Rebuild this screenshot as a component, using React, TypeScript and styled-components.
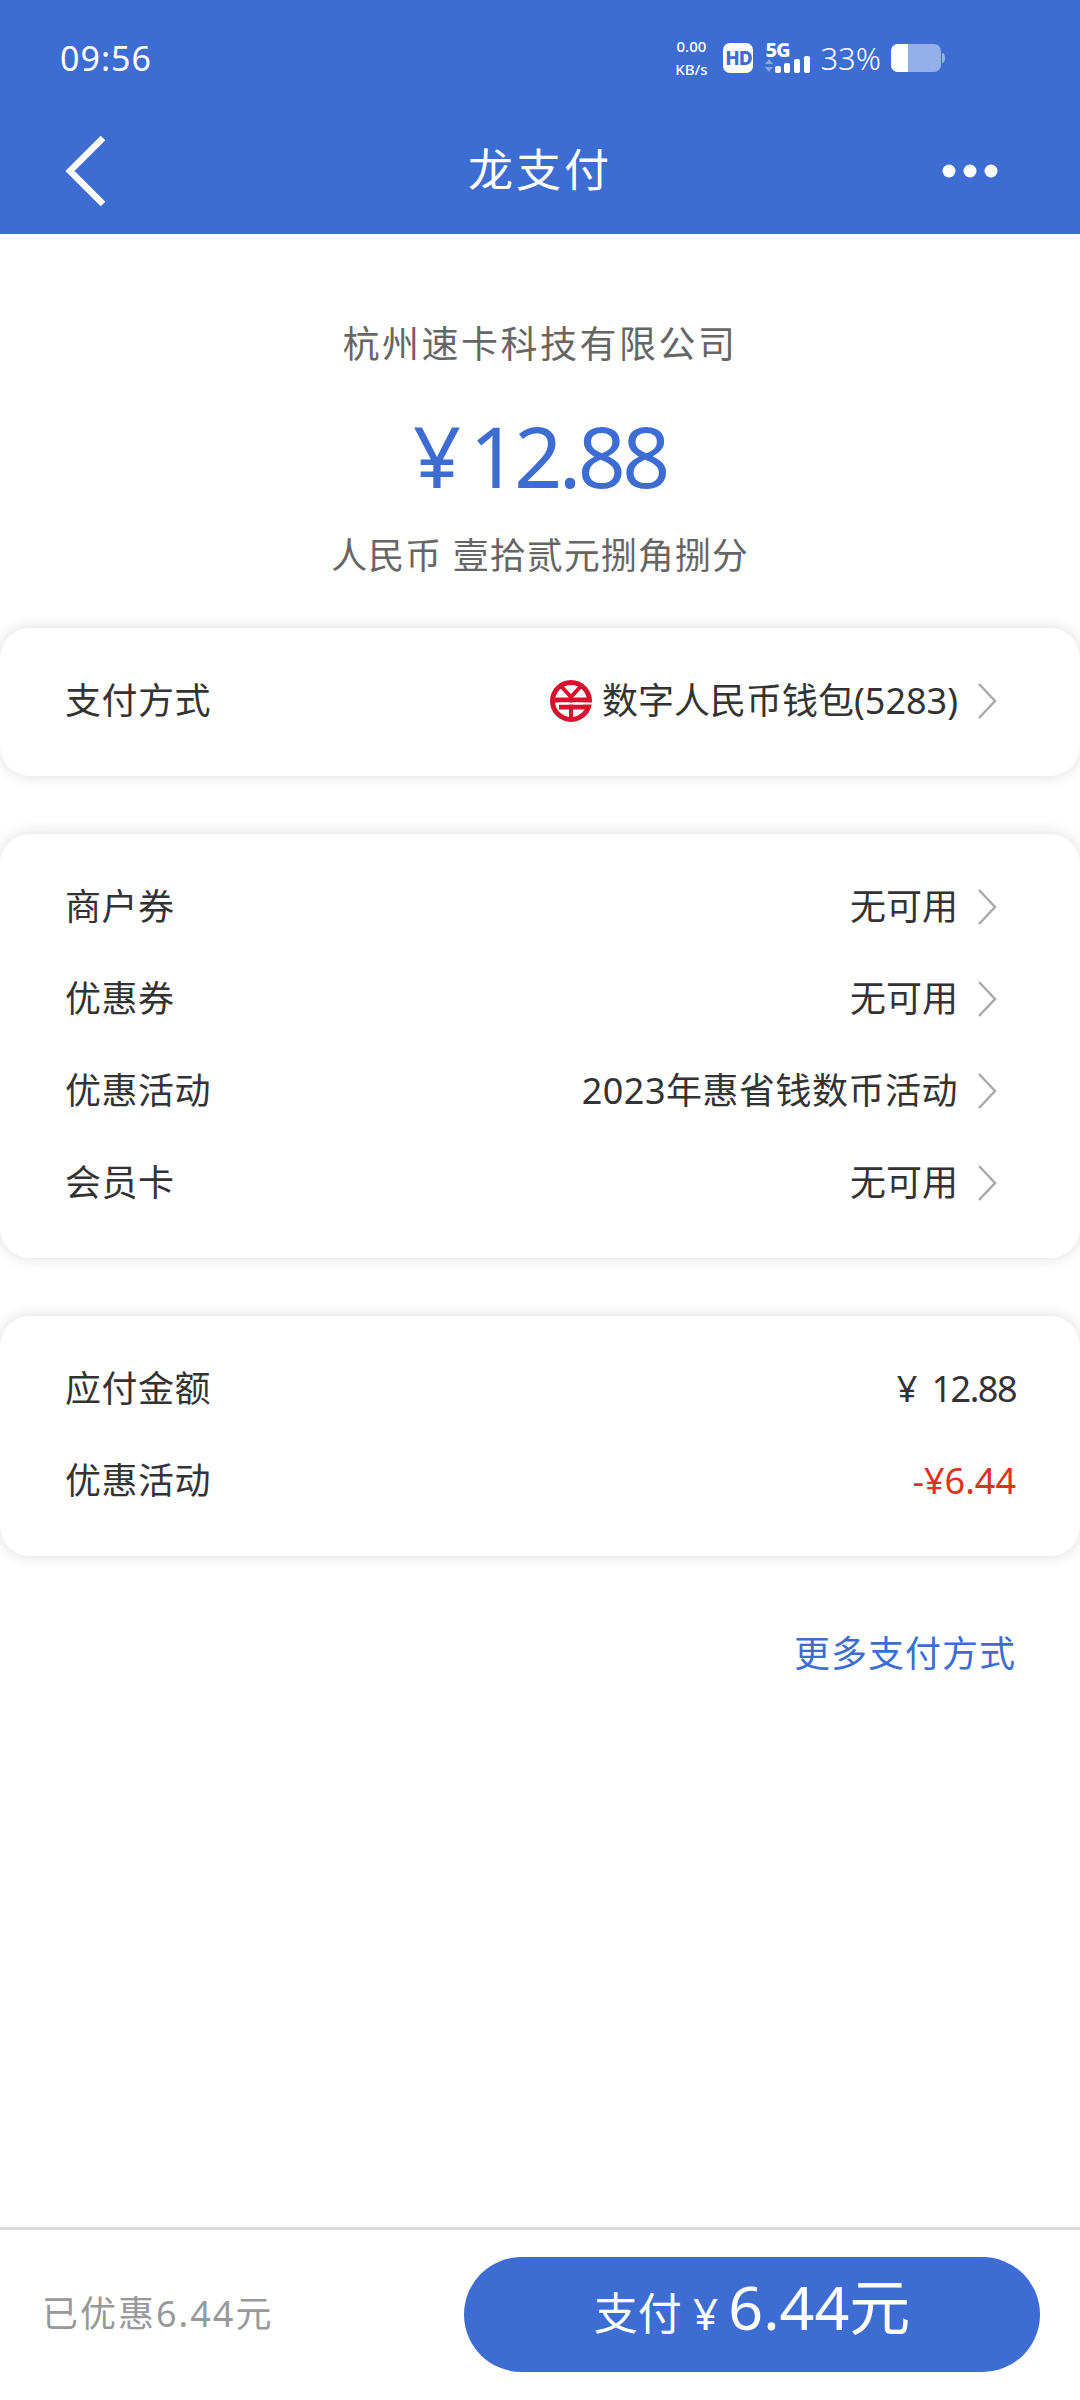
import React from 'react';
import styled, { createGlobalStyle } from 'styled-components';

const BLUE = '#3d6dd3';

const GlobalStyle = createGlobalStyle`
  html, body {
    margin: 0;
    padding: 0;
    background: #fff;
  }
  body {
    font-family: "Noto Sans", "Noto Sans CJK SC", sans-serif;
  }
`;

const Page = styled.div`
  width: 1080px;
  height: 2400px;
  display: flex;
  flex-direction: column;
  background: #fff;
  overflow: hidden;
`;

const Header = styled.header`
  background: ${BLUE};
  height: 234px;
  flex: none;
  display: flex;
  flex-direction: column;
  color: #fff;
`;

const StatusBar = styled.div`
  height: 112px;
  padding: 4px 135px 0 60px;
  display: flex;
  align-items: center;
  justify-content: space-between;
  box-sizing: border-box;
`;

const Clock = styled.span`
  font-size: 34px;
  letter-spacing: 1px;
`;

const StatusIcons = styled.div`
  display: flex;
  align-items: center;
`;

const Speed = styled.div`
  width: 40px;
  display: flex;
  flex-direction: column;
  align-items: center;
  font-size: 15px;
  line-height: 23px;
  font-weight: 500;
  white-space: nowrap;
`;

const HdBadge = styled.span`
  width: 30px;
  height: 30px;
  margin-left: 12px;
  border-radius: 7px;
  background: #fff;
  color: ${BLUE};
  font-size: 19px;
  font-weight: 800;
  line-height: 30px;
  text-align: center;
  letter-spacing: -1px;
`;

const Signal = styled.div`
  position: relative;
  width: 46px;
  height: 32px;
  margin-left: 12px;
`;

const SignalLabel = styled.span`
  position: absolute;
  left: 0;
  top: -5px;
  font-size: 20px;
  line-height: 26px;
  font-weight: 800;
  letter-spacing: -1px;
`;

const Percent = styled.span`
  margin-left: 9px;
  font-size: 31px;
  font-weight: 300;
`;

const NavBar = styled.div`
  flex: 1;
  padding: 0 82px 4px 64px;
  display: flex;
  align-items: center;
  justify-content: space-between;
  position: relative;
`;

const NavTitle = styled.h1`
  position: absolute;
  left: 0;
  right: 0;
  margin: 0;
  padding-bottom: 8px;
  text-align: center;
  font-size: 45px;
  font-weight: 400;
  letter-spacing: 3px;
`;

const Summary = styled.section`
  padding-top: 83px;
  height: 394px;
  box-sizing: border-box;
  display: flex;
  flex-direction: column;
  align-items: center;
  flex: none;
`;

const Company = styled.div`
  font-size: 37px;
  line-height: 54px;
  letter-spacing: 2.5px;
  color: #666;
`;

const Amount = styled.div`
  margin-top: 33px;
  font-size: 84px;
  line-height: 104px;
  color: ${BLUE};
  display: flex;
  align-items: baseline;
  letter-spacing: -3.5px;
`;

const Yen = styled.span`
  margin-right: 12px;
`;

const AmountWords = styled.div`
  margin-top: 22px;
  font-size: 36px;
  line-height: 52px;
  letter-spacing: 1px;
  color: #666;
`;

const Card = styled.section<{ $gap: number }>`
  margin-bottom: ${(p) => p.$gap}px;
  padding: 27px 0 29px;
  flex: none;
  background: #fff;
  border-radius: 30px;
  box-shadow: 0 0 16px rgba(0, 0, 0, 0.14);
`;

const Row = styled.div<{ $linked?: boolean }>`
  height: 92px;
  padding: 0 ${(p) => (p.$linked ? 82 : 64)}px 0 65px;
  display: flex;
  align-items: center;
  justify-content: space-between;
`;

const Label = styled.span`
  font-size: 36px;
  line-height: 50px;
  letter-spacing: 0.5px;
  color: #333;
`;

const Value = styled.span`
  display: flex;
  align-items: center;
`;

const ValueText = styled.span<{ $color?: string; $spacing?: number }>`
  font-size: 36px;
  line-height: 50px;
  letter-spacing: ${(p) => p.$spacing || 0}px;
  color: ${(p) => p.$color || '#333'};
`;

const ChevronIcon = styled.svg`
  margin-left: 18px;
  flex: none;
`;

const MoreLink = styled.a`
  align-self: flex-end;
  margin: 4px 64px 0 0;
  font-size: 36px;
  line-height: 52px;
  letter-spacing: 1px;
  color: ${BLUE};
`;

const Footer = styled.footer`
  margin-top: auto;
  height: 173px;
  flex: none;
  padding: 0 40px 0 42px;
  box-sizing: border-box;
  border-top: 3px solid #dcdcdc;
  display: flex;
  align-items: center;
  justify-content: space-between;
`;

const Saved = styled.span`
  font-size: 36px;
  letter-spacing: 2px;
  color: #999;
  padding-bottom: 8px;
`;

const PayButton = styled.button`
  width: 576px;
  height: 115px;
  margin-bottom: 1px;
  border: none;
  border-radius: 58px;
  background: ${BLUE};
  color: #fff;
  font-family: inherit;
  display: flex;
  align-items: baseline;
  justify-content: center;
  padding: 10px 0 0;
  box-sizing: border-box;
`;

const PayLabel = styled.span`
  font-size: 44px;
  margin-right: 10px;
`;

const PayAmount = styled.span`
  font-size: 61px;
  line-height: 80px;
`;

const Chevron = () => (
  <ChevronIcon width="22" height="38" viewBox="0 0 22 38" fill="none">
    <path d="M3 2 L19 19 L3 36" stroke="#aaa" strokeWidth="2.5" />
  </ChevronIcon>
);

const BackIcon = () => (
  <svg width="44" height="72" viewBox="0 0 44 72" fill="none">
    <path d="M39 3 L6 36 L39 69" stroke="#fff" strokeWidth="6.5" />
  </svg>
);

const MoreIcon = () => (
  <svg width="56" height="16" viewBox="0 0 56 16" fill="#fff">
    <circle cx="7" cy="8" r="6.5" />
    <circle cx="28" cy="8" r="6.5" />
    <circle cx="49" cy="8" r="6.5" />
  </svg>
);

const SignalBars = () => (
  <svg width="46" height="32" viewBox="0 0 46 32">
    <path d="M0 22 L4 17 L8 22 Z M0 25 L8 25 L4 30 Z" fill="#fff" fillOpacity="0.4" />
    <rect x="10" y="24" width="6" height="7" rx="2" fill="#fff" />
    <rect x="19" y="21" width="6" height="10" rx="2" fill="#fff" />
    <rect x="29" y="17" width="6" height="14" rx="2" fill="#fff" />
    <rect x="39" y="14" width="6" height="17" rx="2" fill="#fff" />
  </svg>
);

const BatteryIcon = () => (
  <svg width="54" height="28" viewBox="0 0 54 28" style={{ marginLeft: 10 }}>
    <rect x="0" y="0" width="50" height="28" rx="7" fill="#fff" fillOpacity="0.45" />
    <path d="M7 0 H17 V28 H7 A7 7 0 0 1 0 21 V7 A7 7 0 0 1 7 0 Z" fill="#fff" />
    <path d="M51 9 A3 5 0 0 1 51 19 Z" fill="#fff" fillOpacity="0.45" />
  </svg>
);

const DcepLogo = () => (
  <svg width="42" height="42" viewBox="0 0 42 42" style={{ marginRight: 10 }} fill="none">
    <circle cx="21" cy="21" r="18.5" stroke="#d7112e" strokeWidth="5" />
    <path d="M11 6 L21 17 L31 6" stroke="#d7112e" strokeWidth="4" />
    <path d="M21 16 V38" stroke="#d7112e" strokeWidth="4" />
    <path d="M2 20 H40" stroke="#d7112e" strokeWidth="5" />
    <path d="M9 27 H40" stroke="#d7112e" strokeWidth="5" />
    <path d="M9 23.5 H33" stroke="#fff" strokeWidth="2" />
    <path d="M36 23.5 H42" stroke="#fff" strokeWidth="2" />
  </svg>
);

const offerRows = [
  { label: '商户券', value: '无可用', spacing: 0 },
  { label: '优惠券', value: '无可用', spacing: 0 },
  { label: '优惠活动', value: '2023年惠省钱数币活动', spacing: 0.5 },
  { label: '会员卡', value: '无可用', spacing: 0 },
];

export default function App() {
  return (
    <Page>
      <GlobalStyle />
      <Header>
        <StatusBar>
          <Clock>09:56</Clock>
          <StatusIcons>
            <Speed>
              <span>0.00</span>
              <span>KB/s</span>
            </Speed>
            <HdBadge>HD</HdBadge>
            <Signal>
              <SignalBars />
              <SignalLabel>5G</SignalLabel>
            </Signal>
            <Percent>33%</Percent>
            <BatteryIcon />
          </StatusIcons>
        </StatusBar>
        <NavBar>
          <BackIcon />
          <NavTitle>龙支付</NavTitle>
          <MoreIcon />
        </NavBar>
      </Header>

      <Summary>
        <Company>杭州速卡科技有限公司</Company>
        <Amount>
          <Yen>¥</Yen>12.88
        </Amount>
        <AmountWords>人民币 壹拾贰元捌角捌分</AmountWords>
      </Summary>

      <Card $gap={58}>
        <Row $linked>
          <Label>支付方式</Label>
          <Value>
            <DcepLogo />
            <ValueText>数字人民币钱包(5283)</ValueText>
            <Chevron />
          </Value>
        </Row>
      </Card>

      <Card $gap={58}>
        {offerRows.map((row) => (
          <Row $linked key={row.label}>
            <Label>{row.label}</Label>
            <Value>
              <ValueText $spacing={row.spacing}>{row.value}</ValueText>
              <Chevron />
            </Value>
          </Row>
        ))}
      </Card>

      <Card $gap={68}>
        <Row>
          <Label>应付金额</Label>
          <ValueText $spacing={-1.5}>¥&nbsp; 12.88</ValueText>
        </Row>
        <Row>
          <Label>优惠活动</Label>
          <ValueText $color="#e0301e">-¥6.44</ValueText>
        </Row>
      </Card>

      <MoreLink>更多支付方式</MoreLink>

      <Footer>
        <Saved>已优惠6.44元</Saved>
        <PayButton>
          <PayLabel>支付 ¥</PayLabel>
          <PayAmount>6.44元</PayAmount>
        </PayButton>
      </Footer>
    </Page>
  );
}
